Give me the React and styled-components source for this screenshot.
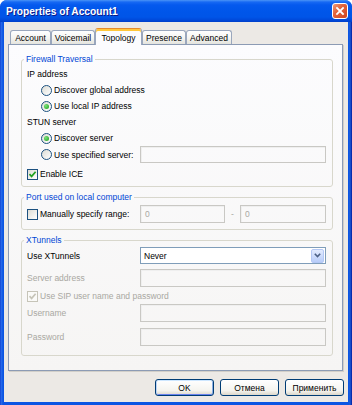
import React from "react";
import styled, { createGlobalStyle, css } from "styled-components";

const FONT = `"Liberation Sans", Arial, sans-serif`;
const GREY = "#A9A8A2";

const GlobalStyle = createGlobalStyle`
  html, body {
    margin: 0;
    padding: 0;
    background: #ffffff;
  }
  body {
    font-family: ${FONT};
    font-size: 8.5px;
    color: #000;
  }
  * {
    box-sizing: border-box;
  }
`;

const Window = styled.div`
  width: 352px;
  height: 405px;
  display: flex;
  flex-direction: column;
  background: linear-gradient(90deg, #0732C8 0, #2C6DEB 1px, #0B55E3 3px, #0B55E3 349px, #1E5ED8 350px, #001C9E 352px);
  border-radius: 7px 7px 0 0;
  overflow: hidden;
`;

const TitleBar = styled.div`
  height: 22px;
  flex: none;
  display: flex;
  align-items: center;
  justify-content: space-between;
  padding: 0 4px 0 6px;
  background: linear-gradient(#4A94F6 0, #1769F3 2px, #0459EE 5px, #0056EA 11px, #0055E8 17px, #0049DA 20px, #003FCA 22px);
`;

const Title = styled.span`
  color: #ffffff;
  font-family: ${FONT};
  font-weight: bold;
  font-size: 10.2px;
  text-shadow: 1px 1px 0 #0B1A8A;
`;

const CloseButton = styled.div`
  width: 16px;
  height: 16px;
  border: 1px solid #ffffff;
  border-radius: 3px;
  background: linear-gradient(135deg, #EC9A7A 0, #E2643C 40%, #CD4520 100%);
  display: flex;
  align-items: center;
  justify-content: center;
`;

const Body = styled.div`
  flex: 1;
  margin: 0 4px 3px;
  background: #ECE9E5;
  display: flex;
  flex-direction: column;
  padding: 6px 5px 0 4px;
`;

const TabStrip = styled.div`
  height: 16px;
  display: flex;
  align-items: flex-end;
  padding-left: 2px;
`;

const Tab = styled.div`
  width: ${(p) => p.$w}px;
  height: 14px;
  display: flex;
  align-items: center;
  justify-content: center;
  border: 1px solid #9AA7BD;
  border-bottom: none;
  border-radius: 3px 3px 0 0;
  background: linear-gradient(#FFFFFF, #F4F4F1 55%, #E4E4DD);
  white-space: nowrap;
  ${(p) =>
    p.$active &&
    css`
      position: relative;
      z-index: 1;
      height: 17px;
      margin-bottom: -1px;
      padding-top: 1px;
      border-top: 1px solid #E68B2C;
      box-shadow: inset 0 2px 0 #FFC73C;
      background: #FCFCFE;
    `}
`;

const Panel = styled.div`
  height: 327px;
  border: 1px solid #8C9BB4;
  background: linear-gradient(#FCFCFE, #F6F5F4);
  box-shadow: 1px 1px 0 #D2CFC9;
  padding: 9px 9px 0 12px;
  display: flex;
  flex-direction: column;
  gap: 5px;
`;

const Group = styled.fieldset`
  margin: 0;
  min-width: 0;
  border: 1px solid #D8D7CC;
  border-radius: 3px;
  padding: ${(p) => p.$pt}px 6px ${(p) => p.$pb}px 5px;
`;

const Legend = styled.legend`
  color: #0046D5;
  line-height: 10px;
  padding: 0 2px;
  margin-left: -3px;
`;

const Line = styled.div`
  height: ${(p) => p.$h || 16}px;
  margin-top: ${(p) => p.$mt || 0}px;
  display: flex;
  align-items: center;
  padding-left: ${(p) => (p.$indent ? 14 : 0)}px;
  color: ${(p) => (p.$disabled ? GREY : "#000")};
  white-space: nowrap;
`;

const FieldRow = styled.div`
  display: grid;
  grid-template-columns: ${(p) => p.$cols || "113px 1fr"};
  align-items: center;
  height: ${(p) => p.$h || 18}px;
  margin-top: ${(p) => p.$mt || 0}px;
`;

const RadioMark = styled.span`
  width: 11px;
  height: 11px;
  margin-right: 2px;
  border: 1px solid #1C5180;
  border-radius: 50%;
  background: linear-gradient(135deg, #DCDCD5, #FFFFFF);
  display: flex;
  align-items: center;
  justify-content: center;
  &::after {
    content: "";
    width: 5px;
    height: 5px;
    border-radius: 50%;
    background: ${(p) => (p.$checked ? "radial-gradient(circle at 35% 35%, #7BE27A, #1B9E1B)" : "transparent")};
  }
`;

const CheckBox = styled.span`
  width: 11px;
  height: 11px;
  margin-right: 2px;
  flex: none;
  border: 1px solid ${(p) => (p.$disabled ? "#C6C4B8" : "#1C5180")};
  background: ${(p) => (p.$disabled ? "#FAFAF8" : "linear-gradient(135deg, #DCDCD5, #FFFFFF)")};
  display: flex;
  align-items: center;
  justify-content: center;
`;

const Input = styled.div`
  height: ${(p) => p.$h || 18}px;
  border: 1px solid #C9C8C4;
  box-shadow: inset 1px 1px 0 #EFEFEF;
  background: transparent;
  color: ${GREY};
  display: flex;
  align-items: center;
  padding-left: 4px;
`;

const Dash = styled.span`
  text-align: center;
  color: ${GREY};
`;

const Select = styled.div`
  height: 17px;
  border: 1px solid #7F9DB9;
  background: #ffffff;
  display: flex;
  align-items: center;
  justify-content: space-between;
  padding: 0 1px 0 3px;
`;

const DropButton = styled.span`
  width: 13px;
  height: 14px;
  border: 1px solid #B4C8F5;
  border-radius: 2px;
  background: linear-gradient(#E2EBFE, #B8CDF9);
  display: flex;
  align-items: center;
  justify-content: center;
`;

const ButtonRow = styled.div`
  margin-top: 8px;
  margin-right: -1px;
  display: flex;
  justify-content: flex-end;
  gap: 6px;
`;

const Button = styled.div`
  width: 59px;
  height: 17px;
  border: 1px solid #003C74;
  border-radius: 3px;
  background: linear-gradient(#FFFFFF, #F5F4EF 70%, #DCD7CB);
  display: flex;
  align-items: center;
  justify-content: center;
  ${(p) =>
    p.$default &&
    css`
      box-shadow: inset 0 1px 0 #CEE7FF, inset 1px 0 0 #BCD4F6, inset -1px 0 0 #89ADE4, inset 0 -1px 0 #6982EE;
    `}
`;

const Radio = ({ checked, children }) => (
  <Line $indent>
    <RadioMark $checked={checked} />
    {children}
  </Line>
);

const Check = ({ checked, disabled, children, ...rest }) => (
  <Line $disabled={disabled} {...rest}>
    <CheckBox $disabled={disabled}>
      {checked && (
        <svg width="9" height="9" viewBox="0 0 9 9">
          <path d="M1.5 4.2 L3.6 6.4 L7.6 1.8" fill="none" stroke={disabled ? "#C6C4B8" : "#21A121"} strokeWidth="1.7" />
        </svg>
      )}
    </CheckBox>
    {children}
  </Line>
);

const TABS = [
  { id: 1, title: "Account", w: 41 },
  { id: 2, title: "Voicemail", w: 44 },
  { id: 3, title: "Topology", w: 47, active: true },
  { id: 4, title: "Presence", w: 44 },
  { id: 5, title: "Advanced", w: 46 },
];

const App = () => {
  return (
    <>
      <GlobalStyle />
      <Window>
        <TitleBar>
          <Title>Properties of Account1</Title>
          <CloseButton>
            <svg width="10" height="10" viewBox="0 0 10 10">
              <path d="M2 2 L8 8 M8 2 L2 8" stroke="#ffffff" strokeWidth="1.8" strokeLinecap="square" />
            </svg>
          </CloseButton>
        </TitleBar>
        <Body>
          <TabStrip>
            {TABS.map((t) => (
              <Tab key={t.id} $w={t.w} $active={t.active}>
                {t.title}
              </Tab>
            ))}
          </TabStrip>
          <Panel>
            <Group $pt={2} $pb={4}>
              <Legend>Firewall Traversal</Legend>
              <Line>IP address</Line>
              <Radio>Discover global address</Radio>
              <Radio checked>Use local IP address</Radio>
              <Line>STUN server</Line>
              <Radio checked>Discover server</Radio>
              <FieldRow $h={17}>
                <Radio>Use specified server:</Radio>
                <Input $h={17} />
              </FieldRow>
              <Check checked $mt={3}>
                Enable ICE
              </Check>
            </Group>
            <Group $pt={3} $pb={6}>
              <Legend>Port used on local computer</Legend>
              <FieldRow $cols="113px 85px 15px 1fr">
                <Check>Manually specify range:</Check>
                <Input>0</Input>
                <Dash>-</Dash>
                <Input>0</Input>
              </FieldRow>
            </Group>
            <Group $pt={2} $pb={9}>
              <Legend>XTunnels</Legend>
              <FieldRow $h={17}>
                <Line>Use XTunnels</Line>
                <Select>
                  Never
                  <DropButton>
                    <svg width="7" height="5" viewBox="0 0 7 5">
                      <path d="M0.8 0.8 L3.5 3.6 L6.2 0.8" fill="none" stroke="#4D6185" strokeWidth="1.6" />
                    </svg>
                  </DropButton>
                </Select>
              </FieldRow>
              <FieldRow $mt={5}>
                <Line $disabled>Server address</Line>
                <Input />
              </FieldRow>
              <Check checked disabled $h={14} $mt={2}>
                Use SIP user name and password
              </Check>
              <FieldRow $mt={1}>
                <Line $disabled>Username</Line>
                <Input />
              </FieldRow>
              <FieldRow $mt={6}>
                <Line $disabled>Password</Line>
                <Input />
              </FieldRow>
            </Group>
          </Panel>
          <ButtonRow>
            <Button $default>OK</Button>
            <Button>Отмена</Button>
            <Button>Применить</Button>
          </ButtonRow>
        </Body>
      </Window>
    </>
  );
};

export default App;
